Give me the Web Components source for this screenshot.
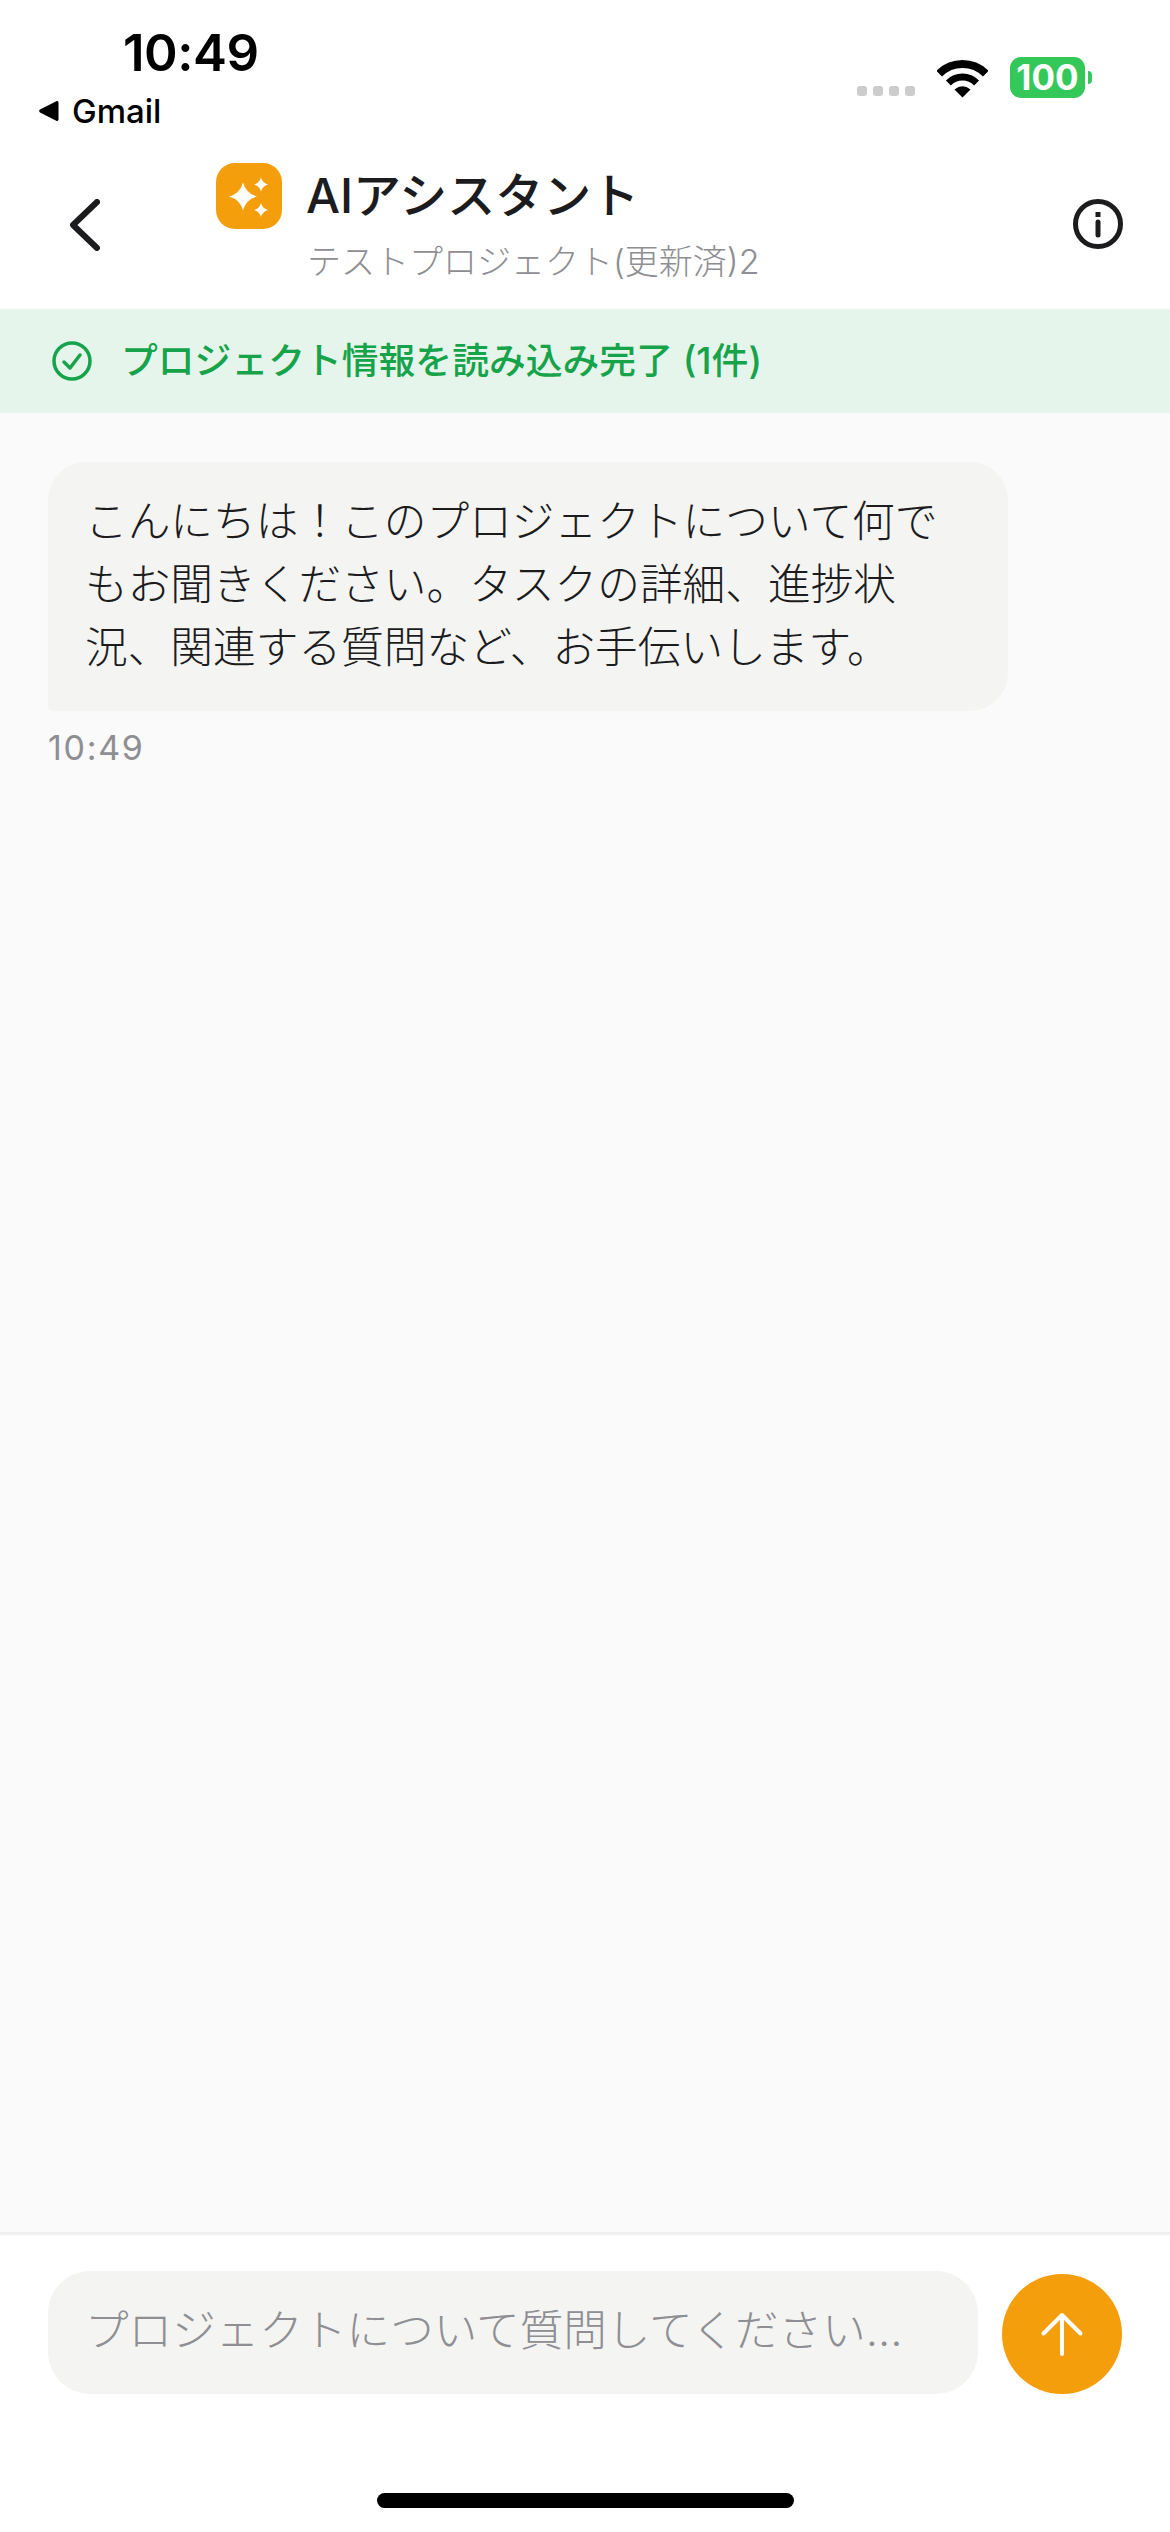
<!DOCTYPE html>
<html lang="ja">
<head>
<meta charset="utf-8">
<title>AIアシスタント</title>
<style>
  html, body { margin: 0; height: 100%; }
  body {
    font-family: Inter, "Noto Sans CJK JP", sans-serif;
    color: #1c1c1e;
    background: #fafafa;
  }
</style>
</head>
<body>
<chat-screen>
  <status-bar slot="top"></status-bar>
  <chat-header slot="top" title="AIアシスタント" subtitle="テストプロジェクト(更新済)2"></chat-header>
  <load-banner slot="top">プロジェクト情報を読み込み完了 (1件)</load-banner>
  <chat-bubble time="10:49">こんにちは！このプロジェクトについて何でもお聞きください。タスクの詳細、進捗状況、関連する質問など、お手伝いします。</chat-bubble>
  <chat-composer slot="bottom" placeholder="プロジェクトについて質問してください..."></chat-composer>
</chat-screen>
<script>
class ChatScreen extends HTMLElement {
  constructor() {
    super();
    this.attachShadow({mode: 'open'});
    this.shadowRoot.innerHTML = `
      <style>
        :host { display: flex; flex-direction: column; height: 2532px; background: #fafafa; }
        .messages { flex: 1; padding: 49px 48px 0; }
      </style>
      <slot name="top"></slot>
      <div class="messages"><slot></slot></div>
      <slot name="bottom"></slot>
    `;
  }
}

class StatusBar extends HTMLElement {
  constructor() {
    super();
    this.attachShadow({mode: 'open'});
    this.shadowRoot.innerHTML = `
      <style>
        :host { display: flex; justify-content: space-between; height: 150px; background: #fff; color: #000; }
        .left { padding: 24px 0 0 38px; }
        .time { font-size: 51px; font-weight: 600; line-height: 58px; margin-left: 85px; letter-spacing: -0.5px; }
        .back { display: flex; align-items: center; gap: 12px; font-size: 33px; font-weight: 500; line-height: 40px; margin-top: 9px; }
        .right { display: flex; align-items: flex-start; padding: 57px 78px 0 0; }
        .dots { display: flex; gap: 6px; margin: 29px 22px 0 0; }
        .dots i { width: 10px; height: 10px; border-radius: 3px; background: #ccc; }
        .wifi { margin: 3px 22px 0 0; }
        .battery {
          width: 75px; height: 41px; border-radius: 11px; background: #34c759; color: #fff;
          font-size: 35px; font-weight: 700; line-height: 41px; text-align: center;
        }
        .nub { width: 4px; height: 13px; margin: 14px 0 0 3px; border-radius: 0 7px 7px 0; background: #34c759; }
      </style>
      <div class="left">
        <div class="time">10:49</div>
        <div class="back">
          <svg width="22" height="22" viewBox="0 0 22 22"><path d="M20.500 2.500v17a1.500 1.500 0 0 1-2.200 1.300L2 12.400a1.600 1.600 0 0 1 0-2.800L18.300 1.200a1.500 1.500 0 0 1 2.200 1.300z" fill="#000"/></svg>
          <span>Gmail</span>
        </div>
      </div>
      <div class="right">
        <div class="dots"><i></i><i></i><i></i><i></i></div>
        <svg class="wifi" width="51" height="38" viewBox="0 0 51 38" fill="none" stroke="#000">
          <path d="M2.200 13.700A33 33 0 0 1 48.800 13.700" stroke-width="8"/>
          <path d="M11.400 22.900A20 20 0 0 1 39.600 22.900" stroke-width="7"/>
          <path d="M25.500 37.500L17.500 29.500Q25.500 23 33.500 29.500Z" fill="#000" stroke="none"/>
        </svg>
        <div class="battery">100</div>
        <div class="nub"></div>
      </div>
    `;
  }
}

class ChatHeader extends HTMLElement {
  constructor() {
    super();
    this.attachShadow({mode: 'open'});
    this.shadowRoot.innerHTML = `
      <style>
        :host { display: flex; height: 159px; box-sizing: border-box; background: #fff; padding: 13px 47px 0 70px; }
        .back { margin-top: 36px; width: 146px; }
        .main { flex: 1; }
        .row { display: flex; align-items: center; gap: 24px; height: 66px; }
        .logo { width: 66px; height: 66px; }
        .title { font-size: 48px; font-weight: 500; line-height: 66px; color: #1c1c1e; }
        .sub { font-size: 34px; line-height: 40px; margin: 13px 0 0 91px; color: #8e8e93; font-weight: 300; }
        .info { margin-top: 36px; }
      </style>
      <div class="back">
        <svg width="30" height="52" viewBox="0 0 30 52" fill="none" stroke="#1c1c1e" stroke-width="6" stroke-linecap="round" stroke-linejoin="round"><path d="M27 3L3 26l24 23"/></svg>
      </div>
      <div class="main">
        <div class="row">
          <svg class="logo" viewBox="0 0 66 66">
            <rect width="66" height="66" rx="19" fill="#f59e0b"/>
            <path d="M27 19.500Q30 30.500 41 33.500Q30 36.500 27 47.500Q24 36.500 13 33.500Q24 30.500 27 19.500Z" fill="#fff"/>
            <path d="M45 14.500Q46.500 20 52 21.500Q46.500 23 45 28.500Q43.500 23 38 21.500Q43.500 20 45 14.500Z" fill="#fff"/>
            <path d="M45 40Q46.500 45.500 52 47Q46.500 48.500 45 54Q43.500 48.500 38 47Q43.500 45.500 45 40Z" fill="#fff"/>
          </svg>
          <div class="title">${this.getAttribute('title')}</div>
        </div>
        <div class="sub">${this.getAttribute('subtitle')}</div>
      </div>
      <svg class="info" width="50" height="50" viewBox="0 0 50 50" fill="none" stroke="#1c1c1e" stroke-width="5">
        <circle cx="25" cy="25" r="22.500"/>
        <path d="M25 23v13" stroke-linecap="round"/>
        <path d="M25 13v5"/>
      </svg>
    `;
  }
}

class LoadBanner extends HTMLElement {
  constructor() {
    super();
    this.attachShadow({mode: 'open'});
    this.shadowRoot.innerHTML = `
      <style>
        :host {
          display: flex; align-items: center; gap: 29px; height: 104px; padding-left: 52px;
          background: #e6f5ec; color: #16a34a; font-size: 36.800px; font-weight: 500;
        }
        span { padding-bottom: 6px; }
      </style>
      <svg width="40" height="40" viewBox="0 0 40 40" fill="none" stroke="#16a34a" stroke-width="3.500" stroke-linecap="round" stroke-linejoin="round">
        <circle cx="20" cy="20" r="18"/>
        <path d="M12 21l6 6 10-13"/>
      </svg>
      <span><slot></slot></span>
    `;
  }
}

class ChatBubble extends HTMLElement {
  constructor() {
    super();
    this.attachShadow({mode: 'open'});
    this.shadowRoot.innerHTML = `
      <style>
        :host { display: block; }
        .bubble {
          box-sizing: border-box; width: 960px; min-height: 249px; padding: 28px 37px;
          background: #f4f4f2; border-radius: 38px 38px 38px 6px;
          font-size: 42.700px; line-height: 63px; font-weight: 300; color: #1c1c1e;
        }
        .time { margin-top: 17px; font-size: 34px; line-height: 40px; color: #8e8e93; letter-spacing: 1.700px; }
      </style>
      <div class="bubble"><slot></slot></div>
      <div class="time">${this.getAttribute('time')}</div>
    `;
  }
}

class ChatComposer extends HTMLElement {
  constructor() {
    super();
    this.attachShadow({mode: 'open'});
    this.shadowRoot.innerHTML = `
      <style>
        :host { display: block; background: #fff; border-top: 3px solid #efefef; height: 300px; box-sizing: border-box; }
        .row { display: flex; align-items: flex-end; gap: 24px; padding: 36px 48px 0; }
        .field {
          flex: 1; height: 123px; box-sizing: border-box; padding: 0 0 11px 37px; display: flex; align-items: center;
          background: #f4f4f2; border-radius: 42px; font-size: 43.600px; font-weight: 300; color: #8e8e93;
        }
        .send { width: 120px; height: 120px; border-radius: 50%; background: #f59e0b; display: flex; align-items: center; justify-content: center; }
        .home { width: 417px; height: 15px; margin: 99px auto 0; border-radius: 8px; background: #000; }
      </style>
      <div class="row">
        <div class="field">${this.getAttribute('placeholder')}</div>
        <div class="send">
          <svg width="44" height="44" viewBox="0 0 44 44" fill="none" stroke="#fff" stroke-width="4" stroke-linecap="round" stroke-linejoin="round"><path d="M22 42V3M3.500 21.500L22 3l18.500 18.500"/></svg>
        </div>
      </div>
      <div class="home"></div>
    `;
  }
}

customElements.define('chat-screen', ChatScreen);
customElements.define('status-bar', StatusBar);
customElements.define('chat-header', ChatHeader);
customElements.define('load-banner', LoadBanner);
customElements.define('chat-bubble', ChatBubble);
customElements.define('chat-composer', ChatComposer);
</script>
</body>
</html>
